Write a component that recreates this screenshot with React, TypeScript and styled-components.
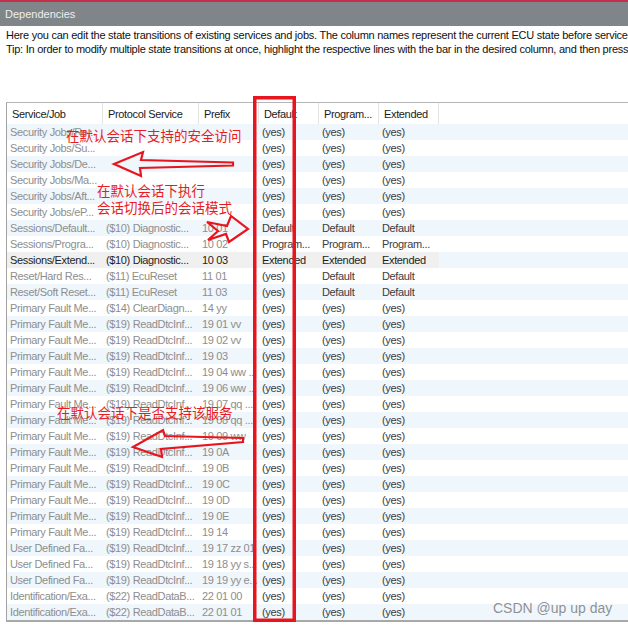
import { styled, createGlobalStyle } from "styled-components";

type DepRow = {
    job: string;
    proto: string;
    prefix: string;
    def: string;
    prog: string;
    ext: string;
    selected?: boolean;
};

const Y = "(yes)";

const fault = (prefix: string): DepRow => ({ job: "Primary Fault Me...", proto: "($19) ReadDtcInf...", prefix, def: Y, prog: Y, ext: Y });
const user = (prefix: string): DepRow => ({ job: "User Defined Fa...", proto: "($19) ReadDtcInf...", prefix, def: Y, prog: Y, ext: Y });
const sec = (job: string): DepRow => ({ job, proto: "", prefix: "", def: Y, prog: Y, ext: Y });

const rows: DepRow[] = [
    sec("Security Jobs/Re..."),
    sec("Security Jobs/Su..."),
    sec("Security Jobs/De..."),
    sec("Security Jobs/Ma..."),
    sec("Security Jobs/Aft..."),
    sec("Security Jobs/eP..."),
    { job: "Sessions/Default...", proto: "($10) Diagnostic...", prefix: "10 01", def: "Default", prog: "Default", ext: "Default" },
    { job: "Sessions/Progra...", proto: "($10) Diagnostic...", prefix: "10 02", def: "Program...", prog: "Program...", ext: "Program..." },
    { job: "Sessions/Extend...", proto: "($10) Diagnostic...", prefix: "10 03", def: "Extended", prog: "Extended", ext: "Extended", selected: true },
    { job: "Reset/Hard Res...", proto: "($11) EcuReset", prefix: "11 01", def: Y, prog: "Default", ext: "Default" },
    { job: "Reset/Soft Reset...", proto: "($11) EcuReset", prefix: "11 03", def: Y, prog: "Default", ext: "Default" },
    { job: "Primary Fault Me...", proto: "($14) ClearDiagn...", prefix: "14 yy", def: Y, prog: Y, ext: Y },
    fault("19 01 vv"),
    fault("19 02 vv"),
    fault("19 03"),
    fault("19 04 ww ..."),
    fault("19 06 ww ..."),
    fault("19 07 qq ..."),
    fault("19 08 qq ..."),
    fault("19 09 ww"),
    fault("19 0A"),
    fault("19 0B"),
    fault("19 0C"),
    fault("19 0D"),
    fault("19 0E"),
    fault("19 14"),
    user("19 17 zz 01"),
    user("19 18 yy s..."),
    user("19 19 yy e..."),
    { job: "Identification/Exa...", proto: "($22) ReadDataB...", prefix: "22 01 00", def: Y, prog: Y, ext: Y },
    { job: "Identification/Exa...", proto: "($22) ReadDataB...", prefix: "22 01 01", def: Y, prog: Y, ext: Y },
];

const headers = ["Service/Job", "Protocol Service", "Prefix", "Default", "Program...", "Extended"];

function App() {
    return (
        <>
            <GlobalStyle />
            <Window>
                <TopLine />
                <TitleBar>Dependencies</TitleBar>
                <Intro>
                    <p>Here you can edit the state transitions of existing services and jobs. The column names represent the current ECU state before service execution.</p>
                    <p>Tip: In order to modify multiple state transitions at once, highlight the respective lines with the bar in the desired column, and then press the button.</p>
                </Intro>
                <Table>
                    <HeaderRow>
                        {headers.map((h) => (
                            <HeadCell key={h}>{h}</HeadCell>
                        ))}
                        <Filler />
                    </HeaderRow>
                    {rows.map((r, i) => (
                        <Row key={i} $striped={i % 2 === 0}>
                            <Cell $selected={r.selected}>{r.job}</Cell>
                            <Cell $selected={r.selected}>{r.proto}</Cell>
                            <Cell $selected={r.selected}>{r.prefix}</Cell>
                            <Cell $selected={r.selected} $value>{r.def}</Cell>
                            <Cell $selected={r.selected} $value>{r.prog}</Cell>
                            <Cell $selected={r.selected} $value>{r.ext}</Cell>
                            <Filler />
                        </Row>
                    ))}
                </Table>

                {/* 批注层 */}
                <Marks viewBox="0 0 628 625" width="628" height="625">
                    <rect x="254.75" y="97.75" width="39.5" height="522.5" fill="none" stroke="#e8141e" strokeWidth="3.5" />
                    <path d="M233,162.5 L141,160 L143,152 L114,164 L141,176 L140,168 L233,165.5 Z" fill="none" stroke="#e8141e" strokeWidth="2.2" strokeLinejoin="miter" />
                    <path d="M207,222 L227,226 L231,216 L248,229 L229,242 L226,234 L208,240 L218,231 Z" fill="none" stroke="#e8141e" strokeWidth="2.2" />
                    <path d="M243,438 L165,436 L163,430 L133,447 L162,457 L161,449 L243,442 Z" fill="none" stroke="#e8141e" strokeWidth="2.2" />
                </Marks>
                <Note $left={66} $top={127}>在默认会话下支持的安全访问</Note>
                <Note $left={97} $top={182}>在默认会话下执行<br />会话切换后的会话模式</Note>
                <Note $left={57} $top={404}>在默认会话下是否支持该服务</Note>
                <Watermark>CSDN @up up day</Watermark>
            </Window>
        </>
    );
}

const GlobalStyle = createGlobalStyle`
    body {
        margin: 0;
        background: #ffffff;
        overflow: hidden;
    }
`;

const Window = styled.div`
    position: relative;
    width: 628px;
    height: 625px;
    display: flex;
    flex-direction: column;
    background: #ffffff;
    font-family: "Liberation Sans", Arial, sans-serif;
    overflow: hidden;
`;

const TopLine = styled.div`
    height: 2px;
    background: #c4304a;
`;

const TitleBar = styled.div`
    height: 24px;
    display: flex;
    align-items: center;
    padding-left: 5px;
    background: #808589;
    color: #eeeeee;
    font-size: 11px;
`;

const Intro = styled.div`
    padding: 2px 0 0 6px;
    margin-bottom: 46px;
    p {
        margin: 0;
        height: 14px;
        line-height: 14px;
        font-size: 11px;
        letter-spacing: -0.25px;
        color: #111111;
        white-space: nowrap;
        overflow: hidden;
    }
`;

const Table = styled.div`
    margin-left: 6px;
    border-left: 1px solid #a3a3a3;
    border-top: 1px solid #b5b5b5;
    border-bottom: 2px solid #a8a8a8;
    font-size: 11px;
    letter-spacing: -0.35px;
`;

const columns = "96px 96px 60px 60px 60px 60px 1fr";

const HeaderRow = styled.div`
    display: grid;
    grid-template-columns: ${columns};
    height: 21px;
`;

const HeadCell = styled.div`
    display: flex;
    align-items: center;
    padding-left: 5px;
    border-right: 1px solid #e4e4e4;
    color: #1a1a1a;
    white-space: nowrap;
    overflow: hidden;
`;

const Filler = styled.div``;

const Row = styled.div<{ $striped: boolean }>`
    display: grid;
    grid-template-columns: ${columns};
    height: 16px;
    background: ${(p) => (p.$striped ? "#eff6fc" : "#ffffff")};
`;

const Cell = styled.div<{ $selected?: boolean; $value?: boolean }>`
    display: flex;
    align-items: center;
    padding-left: 3px;
    white-space: nowrap;
    overflow: hidden;
    background: ${(p) => (p.$selected ? "#f0f0f0" : "transparent")};
    color: ${(p) => (p.$selected ? "#1e1e1e" : p.$value ? "#3c3c3c" : "#8e8e8e")};
`;

const Marks = styled.svg`
    position: absolute;
    left: 0;
    top: 0;
    pointer-events: none;
`;

const Note = styled.div<{ $left: number; $top: number }>`
    position: absolute;
    left: ${(p) => p.$left}px;
    top: ${(p) => p.$top}px;
    font-family: "Noto Sans CJK SC", "Liberation Sans", sans-serif;
    font-size: 13.5px;
    line-height: 17px;
    color: #e81c24;
    white-space: nowrap;
`;

const Watermark = styled.div`
    position: absolute;
    left: 493px;
    top: 600px;
    font-family: "Liberation Sans", Arial, sans-serif;
    font-size: 14px;
    line-height: 16px;
    color: rgba(125, 125, 125, 0.85);
`;

export default App
